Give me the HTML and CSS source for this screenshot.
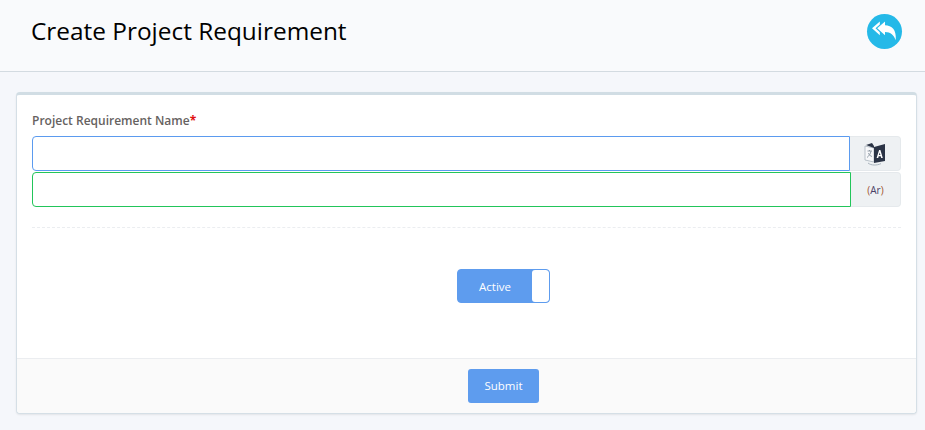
FILE: index.html
```html
<!DOCTYPE html>
<html lang="en">
<head>
    <meta charset="UTF-8">
    <meta name="viewport" content="width=device-width, initial-scale=1.0">
    <title>Create Project Requirement</title>
    <link rel="stylesheet" href="styles.css">
</head>
<body>

<!-- Page header -->
<div class="page-header">
    <h1>Create Project Requirement</h1>
    <a class="back-btn" href="#" aria-label="Back">
        <svg width="25" height="22" viewBox="0 0 24 20">
            <path d="M7.5 0 L7.5 2.8 L3.4 6.5 L7.5 10.2 L7.5 13 L0 6.5 Z" fill="#fff"/>
            <path d="M12.5 0 L12.5 3.6 C19 4 23.6 7.6 22.8 18 C21 13 18 10 12.5 10 L12.5 13 L5 6.5 Z" fill="#fff"/>
        </svg>
    </a>
</div>

<!-- Form card -->
<div class="card">
    <div class="card-body">
        <label class="field-label">Project Requirement Name<span class="req">*</span></label>
        <div class="input-row">
            <input type="text" class="input input-en">
            <span class="addon">
                <svg width="22" height="24" viewBox="0 0 22 24">
                    <path d="M1 4 L10 6 L10 20 L1 18 Z" fill="#f7f8fa" stroke="#a9b4bd" stroke-width="0.8"/>
                    <path d="M3.5 9 L8 9 M5.5 8 L5.5 9 M7 9 C6.5 12 5 14 3 15.5 M4.5 11 C5 13 6.5 14 8 14.5" fill="none" stroke="#8a96a2" stroke-width="0.9"/>
                    <path d="M2 3 L8 1 L10 4 L10 6 Z" fill="#2b3446"/>
                    <path d="M10 5 L21 2 L21 19 L10 21 Z" fill="#2b3446"/>
                    <path d="M12.6 16 L15.1 8 L16.4 8 L18.8 16 L17.2 16 L16.7 14.2 L14.7 14.2 L14.2 16 Z M15 13 L16.4 13 L15.7 10.4 Z" fill="#fff" fill-rule="evenodd"/>
                    <path d="M4 21 C7 23.6 13 23.6 17 21.6" fill="none" stroke="#a9b4bd" stroke-width="1"/>
                </svg>
            </span>
        </div>
        <div class="input-row">
            <input type="text" class="input input-ar">
            <span class="addon addon-ar"><span class="paren">(</span>Ar<span class="paren">)</span></span>
        </div>
        <div class="divider"></div>
        <div class="toggle-wrap">
            <div class="toggle">
                <span class="toggle-label">Active</span>
                <span class="toggle-handle"></span>
            </div>
        </div>
    </div>
    <div class="card-footer">
        <button class="submit-btn">Submit</button>
    </div>
</div>

</body>
</html>
```

FILE: styles.css
```css
body {
    font-family: "Open Sans", "Noto Sans", sans-serif;
    background-color: #f5f7fb;
    margin: 0;
    height: 430px;
    overflow: hidden;
}
.page-header {
    display: flex;
    justify-content: space-between;
    align-items: center;
    height: 63px;
    padding: 0 23px 8px 31px;
    background-color: #f9fafc;
    border-bottom: 1px solid #d3dbe1;
}
h1 {
    margin: -2px 0 0;
    font-size: 24.4px;
    font-weight: 400;
    color: #000;
}
.back-btn {
    display: flex;
    align-items: center;
    justify-content: center;
    width: 35px;
    height: 35px;
    border-radius: 50%;
    background-color: #25b9e8;
}
.card {
    margin: 20px 8px 0 16px;
    height: 322px;
    box-sizing: border-box;
    display: flex;
    flex-direction: column;
    background-color: white;
    border: 1px solid #d5dfe6;
    border-top: 3px solid #d1dde4;
    border-radius: 4px;
    box-shadow: 0 1px 2px rgba(0, 0, 0, 0.08);
}
.card-body {
    flex: 1;
    padding: 17px 15px 0 15px;
}
.field-label {
    display: block;
    height: 24px;
    font-size: 12px;
    line-height: 17px;
    font-weight: 600;
    color: #66625f;
}
.req {
    color: #e01010;
    font-weight: 700;
}
.input-row {
    display: flex;
    height: 35px;
    margin-bottom: 1px;
}
.input {
    flex: 1;
    min-width: 0;
    padding: 0 10px;
    border-radius: 4px 0 0 4px;
    background-color: white;
    outline: none;
}
.input-en {
    border: 1px solid #5b9bef;
}
.input-ar {
    border: 1px solid #22c55a;
}
.addon {
    display: flex;
    align-items: center;
    justify-content: center;
    width: 51px;
    box-sizing: border-box;
    background-color: #eef1f3;
    border: 1px solid #e5e9ec;
    border-left: none;
    border-radius: 0 4px 4px 0;
}
.addon-ar {
    width: 50px;
    font-size: 10px;
    color: #4a3f66;
}
.paren {
    color: #a0522d;
}
.divider {
    margin-top: 20px;
    border-top: 1px dashed #ebedf0;
}
.toggle-wrap {
    display: flex;
    justify-content: center;
    padding: 41px 0 0 74px;
}
.toggle {
    display: flex;
    width: 93px;
    height: 34px;
    box-sizing: border-box;
    background-color: #5e9cee;
    border: 1px solid #5e9cee;
    border-radius: 4px;
    overflow: hidden;
}
.toggle-label {
    flex: 1;
    text-align: center;
    font-size: 11.5px;
    font-weight: 500;
    line-height: 34px;
    color: white;
}
.toggle-handle {
    width: 17px;
    background-color: white;
    border-radius: 3px;
}
.card-footer {
    display: flex;
    justify-content: center;
    align-items: center;
    height: 55px;
    padding-left: 74px;
    background-color: #fafafa;
    border-top: 1px solid #ebedf0;
    border-radius: 0 0 4px 4px;
    box-sizing: border-box;
}
.submit-btn {
    width: 71px;
    height: 34px;
    padding: 0 0 2px;
    font-family: inherit;
    font-size: 11.5px;
    font-weight: 500;
    color: white;
    background-color: #5e9cee;
    border: none;
    border-radius: 3px;
    cursor: pointer;
}
```
